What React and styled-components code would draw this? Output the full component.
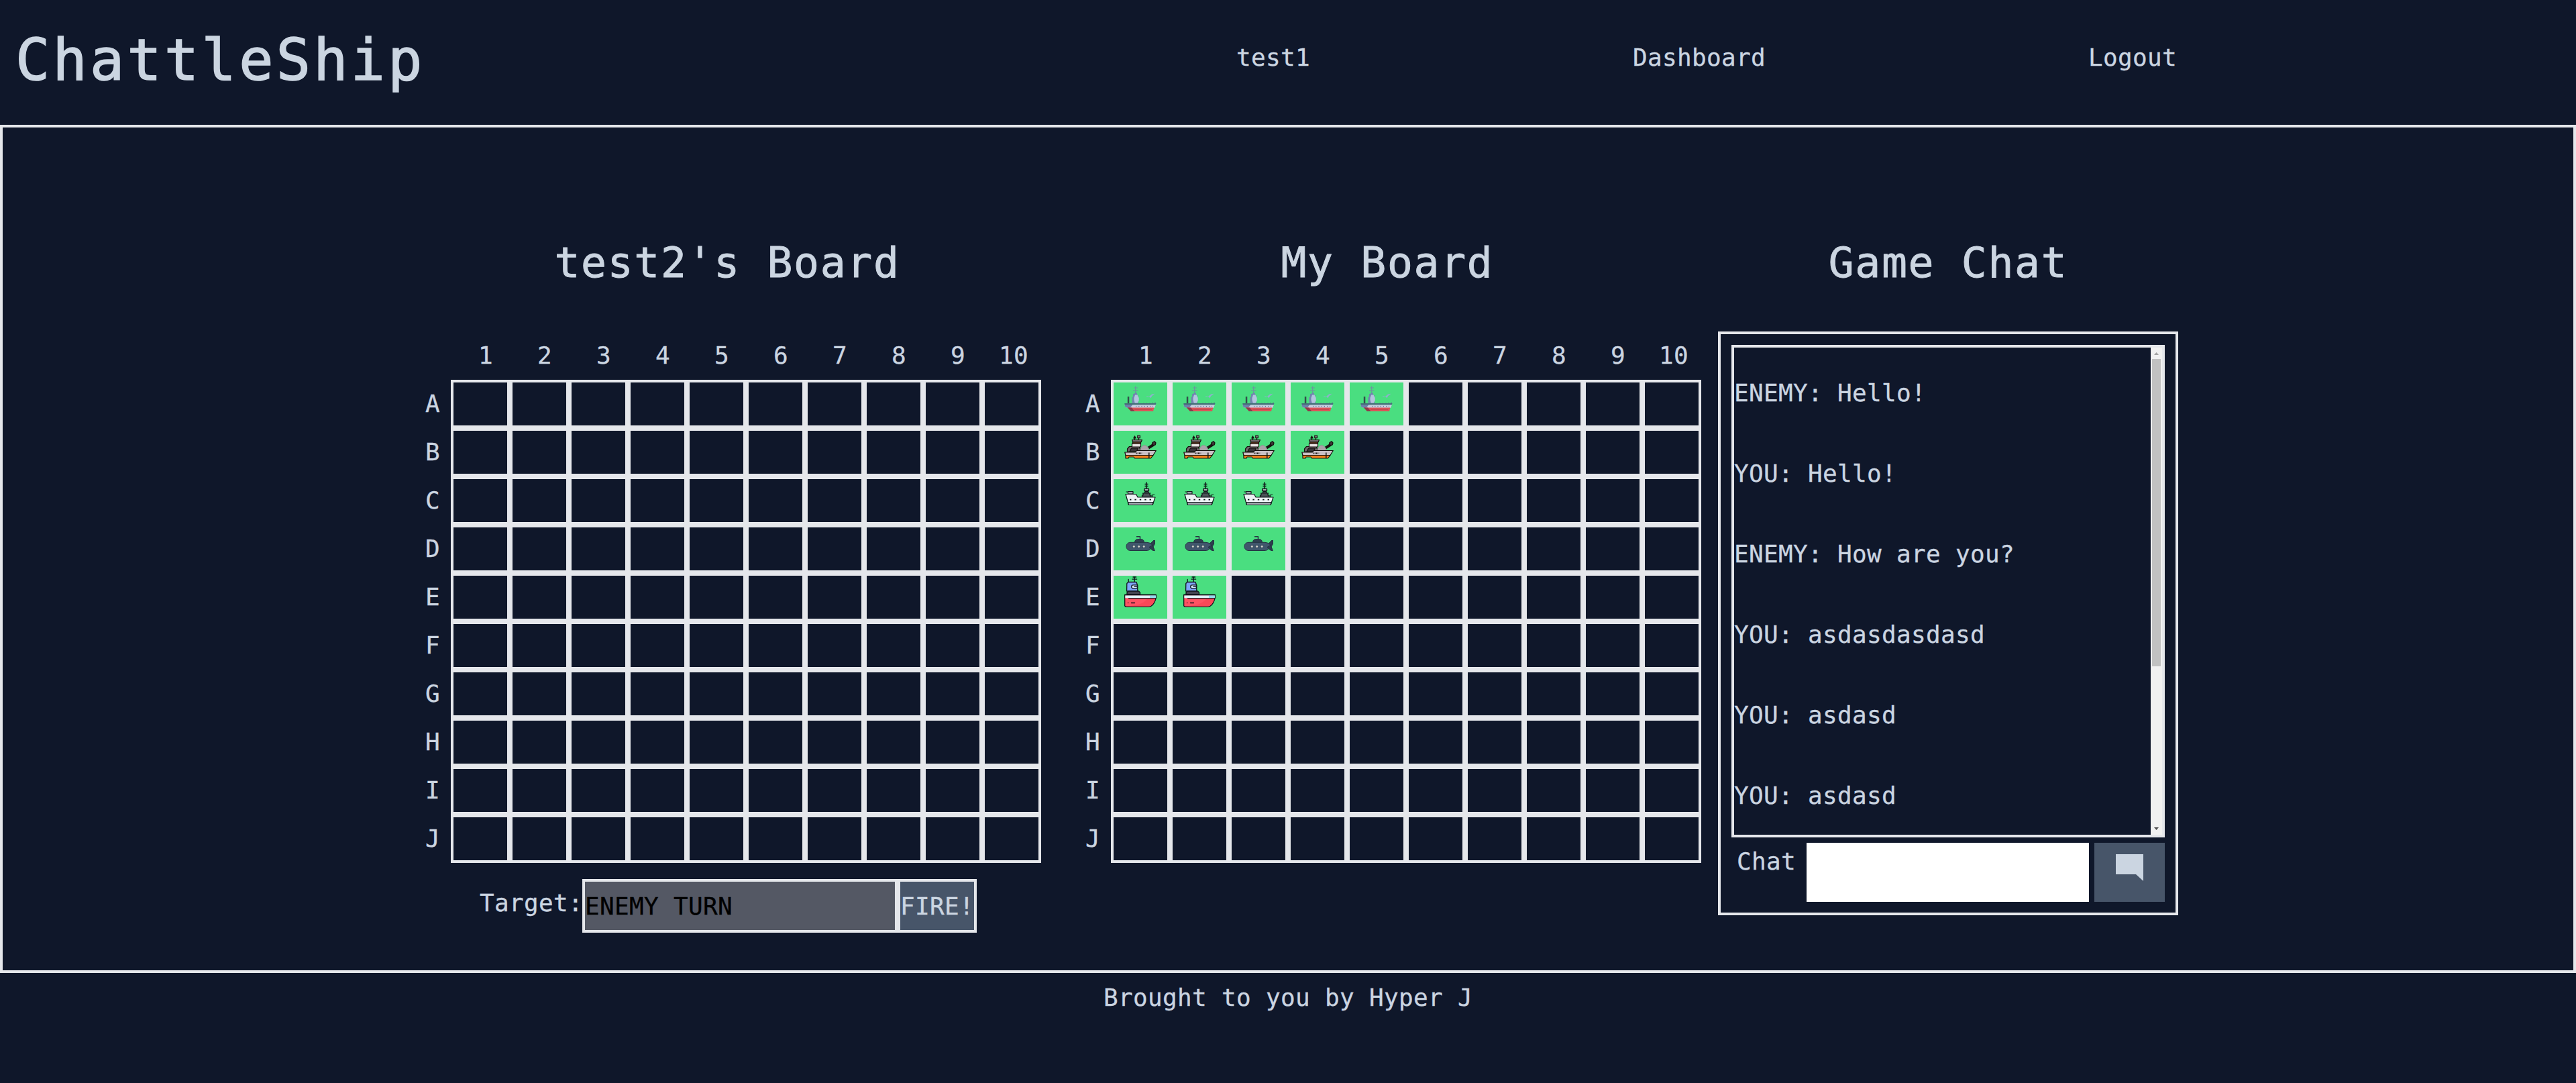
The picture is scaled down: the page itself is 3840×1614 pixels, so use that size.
import React from "react";
import styled, { createGlobalStyle } from "styled-components";

const INK = "#cbd5e1";
const NAVY = "#0f172a";
const LINE = "#e5e7eb";
const SLATE = "#475569";

const GlobalStyle = createGlobalStyle`
  *, *::before, *::after { box-sizing: border-box; margin: 0; padding: 0; }
  body {
    background: ${NAVY};
    color: ${INK};
    font-family: "DejaVu Sans Mono", "Liberation Mono", monospace;
    font-size: 36px;
    letter-spacing: 0.33px;
    -webkit-text-stroke: 0.3px currentColor;
  }
  button, input { font: inherit; letter-spacing: inherit; border-radius: 0; }
`;

const Page = styled.div`
  display: flex;
  flex-direction: column;
  min-height: 1614px;
  overflow: hidden;
`;

const Header = styled.header`
  display: flex;
  align-items: flex-start;
  justify-content: space-between;
  height: 186px;
  padding: 0 595px 0 23px;
`;

const Logo = styled.h1`
  font-size: 85px;
  font-weight: 400;
  line-height: 180px;
  letter-spacing: 4.35px;
  -webkit-text-stroke: 1.6px currentColor;
`;

const Nav = styled.nav`
  display: flex;
  gap: 481px;
`;

const NavLink = styled.a`
  line-height: 172px;
`;

const Main = styled.main`
  display: flex;
  align-items: flex-start;
  height: 1264px;
  padding: 166px 0 0 612px;
  border: 4px solid ${LINE};
`;

const Column = styled.section`
  display: flex;
  flex-direction: column;
  width: ${(p) => p.$width}px;
  margin-right: ${(p) => p.$gap || 0}px;
`;

const Heading = styled.h2`
  height: 138px;
  font-size: 63px;
  font-weight: 400;
  line-height: 72px;
  letter-spacing: 1.7px;
  text-align: center;
  -webkit-text-stroke: 0.9px currentColor;
`;

const NumberRow = styled.div`
  display: flex;
  height: 72px;
  padding-left: 56px;
`;

const ColumnNumber = styled.span`
  width: 88px;
  padding-left: ${(p) => (p.$wide ? 6 : 16)}px;
  line-height: 72px;
  text-align: center;
`;

const BoardRow = styled.div`
  display: flex;
  height: 72px;
`;

const RowLetter = styled.span`
  width: 56px;
  padding-left: 18px;
  line-height: 72px;
`;

const Cell = styled.div`
  display: flex;
  align-items: flex-start;
  justify-content: center;
  width: 88px;
  height: 72px;
  border: 4px solid ${LINE};
  background: ${(p) => (p.$occupied ? "#4ade80" : "transparent")};
`;

const ShipIcon = styled.svg`
  display: block;
  width: 48px;
  height: 48px;
`;

const TargetForm = styled.form`
  display: flex;
  height: 80px;
  margin: 24px 0 0 99px;
`;

const TargetLabel = styled.label`
  width: 153px;
  line-height: 72px;
`;

const TargetInput = styled.input`
  width: 470px;
  border: 4px solid ${LINE};
  background: #545864;
  color: #000;
`;

const FireButton = styled.button`
  width: 118px;
  border: 4px solid ${LINE};
  background: ${SLATE};
  color: ${INK};
`;

const ChatBox = styled.div`
  display: flex;
  flex-direction: column;
  gap: 8px;
  height: 870px;
  padding: 16px;
  border: 4px solid ${LINE};
`;

const Transcript = styled.div`
  display: flex;
  height: 734px;
  border: 4px solid ${LINE};
`;

const Messages = styled.ul`
  flex: 1;
  padding-top: 8px;
  overflow: hidden;
  list-style: none;
`;

const Message = styled.li`
  height: 120px;
  line-height: 120px;
  white-space: pre;
  &:last-child { height: 118px; }
`;

const ScrollTrack = styled.div`
  display: flex;
  flex-direction: column;
  align-items: center;
  width: 17px;
  background: #f1f1f1;
`;

const ScrollArrow = styled.svg`
  display: block;
  width: 17px;
  height: 17px;
`;

const ScrollThumb = styled.div`
  width: 13px;
  height: 458px;
  margin-bottom: auto;
  background: #c1c1c1;
`;

const ChatForm = styled.form`
  display: flex;
  height: 88px;
`;

const ChatLabel = styled.label`
  width: 112px;
  padding-left: 8px;
  line-height: 56px;
`;

const ChatInput = styled.input`
  width: 421px;
  margin-right: 8px;
  border: 0;
  background: #fff;
`;

const SendButton = styled.button`
  display: flex;
  flex: 1;
  align-items: flex-start;
  padding: 17px 0 0 32px;
  border: 0;
  background: ${SLATE};
`;

const BubbleIcon = styled.svg`
  display: block;
  width: 41px;
  height: 40px;
`;

const Footer = styled.footer`
  line-height: 73px;
  text-align: center;
`;

const Carrier = () => (
  <ShipIcon viewBox="0 0 48 48">
    <path d="M16.700 5.500V17M14 8h6M13 12.300h7.500" fill="none" stroke="#6f93a0" strokeWidth="1.1" />
    <path d="M13 17h2v-1.500h4V18l2 1.500V31H11.500V22l1.500-1z" fill="#6f87ad" />
    <path d="M16 18.500h3.500l2.200 4.500v4l-2 3.500h-4L14.500 26v-3z" fill="#b4c4df" />
    <path d="M4.800 21h2.500v10H4.800z" fill="#32504a" />
    <path d="M33 20.500l4 .5 4-3.500 4.500-.8-4.500 3.600-1.500 3.200-1.500-2-4.500.2z" fill="#8fb0cc" />
    <path d="M29 30v1.500M33.500 30v1.500M38 30v1.500M42 29.500v2M46 29v2" stroke="#56847c" strokeWidth="0.8" />
    <path d="M.5 33H47l-2 5H5L1 36z" fill="#c6cfe1" />
    <path d="M.5 33h12l-4 5H5L1 36z" fill="#6d7faa" />
    <path d="M.3 31h47.200l-.7 2.200H.6z" fill="#446f78" />
    <path d="M17 35.400h26" stroke="#55627e" strokeWidth="1" strokeDasharray="1.200 3" />
    <path d="M5 37.400h39.500L43 43H10z" fill="#dc5359" />
    <path d="M5 37.400h6l4.500 5.600H10z" fill="#8e3a4b" />
    <path d="M15 40.300h26" stroke="#b74350" strokeWidth="0.9" />
  </ShipIcon>
);

const Battleship = () => (
  <ShipIcon viewBox="0 0 48 48" stroke="#16110f" strokeWidth="1.200" strokeLinejoin="round">
    <path d="M15.500 14V7.500M13.800 11l1.700-3 1.700 3z" fill="#333" />
    <path d="M21.500 14v-4M19.800 7h3.600v3.600h-3.600z" fill="#888" />
    <path d="M36 25.500l8-5" strokeWidth="4" />
    <path d="M42 17.500l3-1.800 2 2.300-.8 3-3 .7-1.800-2z" fill="#3d3638" />
    <path d="M4.500 31v-4l3-3.500H22l3 7.500z" fill="#70686c" />
    <path d="M8 31l2.500-5h10L18 31z" fill="#393438" />
    <path d="M11.500 19h13v5h-13z" fill="#e8e2e3" />
    <path d="M12.500 16.500h12V19h-12z" fill="#7c4524" />
    <path d="M11.500 13.500h15l-1.500 3.300H13z" fill="#726b6e" />
    <path d="M23.500 30c.5-4.500 3-8 6.500-8.500 3.500.5 6.500 3.500 7 8z" fill="#aaa2a8" stroke="#898087" strokeWidth="0.600" />
    <path d="M.8 32h15.700l2-2.500h28.800l-4.300 7H2z" fill="#c9c0c6" />
    <path d="M2 36.500h41L39.500 41H15.500l-1.500-2H7l-1 2H2z" fill="#f58220" />
    <path d="M17.500 33.500h9" strokeWidth="1.800" strokeDasharray="1.200 1" />
    <path d="M36.800 32.500v8.500" strokeWidth="1.500" />
  </ShipIcon>
);

const Cruiser = () => (
  <ShipIcon viewBox="0 0 48 48" stroke="#10191a" strokeWidth="1.200" strokeLinejoin="round">
    <path d="M33 4.500V21M30.500 7.500h5M30.500 10.500h5" fill="none" strokeWidth="1.500" />
    <path d="M29.800 14.500h6.600v3h-6.600z" fill="#d9e0e4" strokeWidth="1.500" />
    <path d="M30 21l1-2.500h4.500l1 2.500z" fill="#43494e" />
    <path d="M2.500 19h3M5.500 18.500H13V22H5.500z" fill="#9aa3aa" />
    <path d="M28 21h10v3h2v3H26.500v-3H28zM27 21h12.500" fill="#4b5257" />
    <path d="M41.800 27v-3.500h3.400" fill="none" />
    <path d="M2 22.500h15.500L20 27h26l-3.800 11.500H6.500z" fill="#edf2f5" />
    <path d="M5.700 34.500h37.600l-1.300 4H6.500z" fill="#a3abb1" />
    <path d="M8 30.600h35" strokeWidth="1.600" strokeDasharray="2.400 5" />
  </ShipIcon>
);

const Submarine = () => (
  <ShipIcon viewBox="0 0 48 48" stroke="#243442" strokeWidth="1" strokeLinejoin="round">
    <path d="M18 13.700h5.500V18" fill="none" strokeWidth="1.500" />
    <path d="M15.500 22.500c0-3 1.500-4.500 4-5h6c2.500.5 4 2 4 5z" fill="#2e3f50" />
    <path d="M9 22.300h24c3 0 5 1.500 7 1.200l3-3.500 2.300-.7v5.500L43 29l2.200 5.700-3.200-.7-3-2.500c-1.500 2.300-3.500 3-6 3H9c-8 0-8-12.200 0-12.200z" fill="#40566c" />
    <path d="M39.500 24l3.500-4 2.300-.7v5.500L42.500 27zM37 29.500l5-3 3.200 8.200-3.200-.7z" fill="#2d3e4e" />
    <g fill="#d3d3cd" stroke="#334758">
      <circle cx="14.300" cy="28.500" r="2" />
      <circle cx="21.700" cy="28.500" r="2" />
      <circle cx="29.200" cy="28.500" r="2" />
    </g>
  </ShipIcon>
);

const Patrol = () => (
  <ShipIcon viewBox="0 0 48 48" stroke="#10131c" strokeWidth="1.300" strokeLinejoin="round" strokeLinecap="round">
    <path d="M15.300 1.700V9M13 2h4.600M12 5.200h6.600M6.200 5.500V9" fill="none" />
    <path d="M3.600 23l.2-11.500 2-2H18l1.800 5V23z" fill="#7ea5f8" />
    <path d="M19.500 13.800h-6.500c-3 0-3 5 0 5h6.300v-2.600h-4.500" fill="#d5ebfa" />
    <path d="M4 28v-3l2-2h15.500l2 2v3z" fill="#454451" />
    <path d="M.7 28.500h46.600v4L46 37c-2 5.500-5 9-9.500 9.300H2.200L.7 45z" fill="#ff5263" />
    <path d="M1.400 29.300h45.200v3.900H1.400z" fill="#dff4fb" stroke="none" />
    <path d="M38 29.300h9v3.600h-9z" fill="#91dcec" stroke="none" />
    <path d="M2 45.300c16 0 27-4 32-10.600h12c-2 6-5 10.500-9.500 10.700z" fill="#f94858" stroke="none" />
    <path d="M.7 28.500h46.600M6.500 33.800H47M5.500 40.500h.3M10.500 40.500h5" fill="none" />
  </ShipIcon>
);

const LETTERS = "ABCDEFGHIJ".split("");
const NUMBERS = [1, 2, 3, 4, 5, 6, 7, 8, 9, 10];

const FLEET = {
  A: { length: 5, Icon: Carrier },
  B: { length: 4, Icon: Battleship },
  C: { length: 3, Icon: Cruiser },
  D: { length: 3, Icon: Submarine },
  E: { length: 2, Icon: Patrol },
};

const MESSAGES = [
  "ENEMY: Hello!",
  "YOU: Hello!",
  "ENEMY: How are you?",
  "YOU: asdasdasdasd",
  "YOU: asdasd",
  "YOU: asdasd",
];

function Board({ fleet = {} }) {
  return (
    <div>
      <NumberRow>
        {NUMBERS.map((n) => (
          <ColumnNumber key={n} $wide={n > 9}>{n}</ColumnNumber>
        ))}
      </NumberRow>
      {LETTERS.map((letter) => {
        const ship = fleet[letter];
        return (
          <BoardRow key={letter}>
            <RowLetter>{letter}</RowLetter>
            {NUMBERS.map((n) => {
              const occupied = Boolean(ship && n <= ship.length);
              return (
                <Cell key={n} $occupied={occupied}>
                  {occupied && <ship.Icon />}
                </Cell>
              );
            })}
          </BoardRow>
        );
      })}
    </div>
  );
}

export default function App() {
  return (
    <Page>
      <GlobalStyle />
      <Header>
        <Logo>ChattleShip</Logo>
        <Nav>
          <NavLink>test1</NavLink>
          <NavLink>Dashboard</NavLink>
          <NavLink>Logout</NavLink>
        </Nav>
      </Header>
      <Main>
        <Column $width={936} $gap={48}>
          <Heading>test2's Board</Heading>
          <Board />
          <TargetForm>
            <TargetLabel htmlFor="target">Target:</TargetLabel>
            <TargetInput id="target" defaultValue="ENEMY TURN" />
            <FireButton type="button">FIRE!</FireButton>
          </TargetForm>
        </Column>
        <Column $width={936} $gap={25}>
          <Heading>My Board</Heading>
          <Board fleet={FLEET} />
        </Column>
        <Column $width={686}>
          <Heading>Game Chat</Heading>
          <ChatBox>
            <Transcript>
              <Messages>
                {MESSAGES.map((text, i) => (
                  <Message key={i}>{text}</Message>
                ))}
              </Messages>
              <ScrollTrack>
                <ScrollArrow viewBox="0 0 17 17">
                  <path d="M5 11h7L8.500 7z" fill="#a3a3a3" />
                </ScrollArrow>
                <ScrollThumb />
                <ScrollArrow viewBox="0 0 17 17">
                  <path d="M5 6h7l-3.500 4z" fill="#505050" />
                </ScrollArrow>
              </ScrollTrack>
            </Transcript>
            <ChatForm>
              <ChatLabel htmlFor="chat">Chat</ChatLabel>
              <ChatInput id="chat" />
              <SendButton type="button" aria-label="Send">
                <BubbleIcon viewBox="0 0 41 40">
                  <path d="M0 0h41v40L30 30H0z" fill={INK} />
                </BubbleIcon>
              </SendButton>
            </ChatForm>
          </ChatBox>
        </Column>
      </Main>
      <Footer>Brought to you by Hyper J</Footer>
    </Page>
  );
}
